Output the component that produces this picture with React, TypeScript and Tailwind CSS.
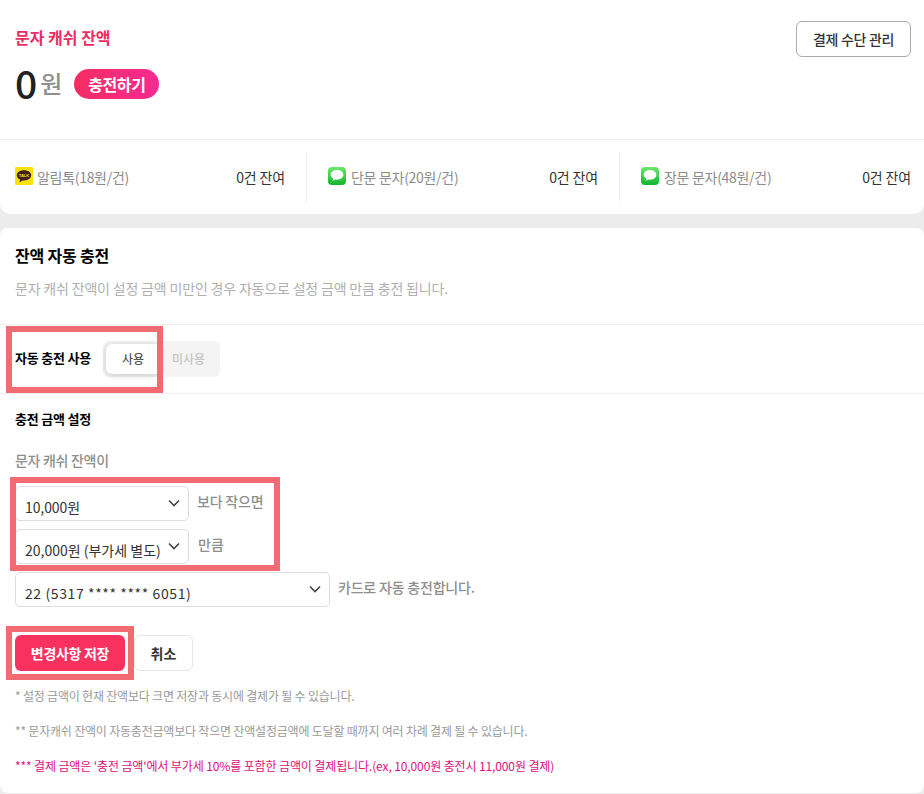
import React from "react";

const font = { fontFamily: '"Noto Sans CJK KR", "Noto Sans", sans-serif' };

function Kakao() {
  return (
    <svg width="18" height="18" viewBox="0 0 18 18" className="shrink-0">
      <rect width="18" height="18" rx="1" fill="#fae100" />
      <path d="M9 3.2C4.9 3.2 1.8 5.4 1.8 8.3c0 1.9 1.3 3.5 3.3 4.4l-.7 2.7 3-2c.5.1 1.1.1 1.6.1 4.1 0 7.2-2.300 7.200-5.200S13.100 3.200 9 3.200z" fill="#3c1e1e" />
      <text x="9" y="9.800" textAnchor="middle" fontSize="4" fontWeight="700" fill="#fae100" fontFamily="Liberation Sans">TALK</text>
    </svg>
  );
}

function Msg() {
  return (
    <svg width="18" height="18" viewBox="0 0 18 18" className="shrink-0">
      <defs>
        <linearGradient id="m" x1="0" y1="0" x2="0" y2="1">
          <stop offset="0" stopColor="#6be86a" />
          <stop offset="1" stopColor="#12b52c" />
        </linearGradient>
      </defs>
      <rect width="18" height="18" rx="4" fill="url(#m)" />
      <path d="M9 3C5.400 3 2.600 5.100 2.600 7.800c0 1.700 1.100 3.100 2.800 4 -.2.700-.6 1.300-1.100 1.800 1.100 0 2.100-.5 2.900-1.100.6.100 1.200.2 1.800.2 3.600 0 6.400-2.200 6.400-4.900S12.600 3 9 3z" fill="#fff" />
    </svg>
  );
}

function Stat({ icon, label, border, last, gap }: { icon: React.ReactNode; label: string; border?: boolean; last?: boolean; gap: string }) {
  return (
    <div className={`flex h-[50px] flex-1 items-center justify-between ${border ? "border-l border-[#eeeeee] pl-[21px]" : ""} ${last ? "" : "pr-[21px]"}`}>
      <div className={`flex items-center ${gap}`}>
        <span className="-mt-[3px]">{icon}</span>
        <span className="text-[14px] tracking-[-0.3px] text-[#8c8c8c]">{label}</span>
      </div>
      <span className="text-[14px] tracking-[-0.15px] text-[#333]">0건 잔여</span>
    </div>
  );
}

function Select({ value, width, tracking }: { value: string; width: string; tracking: string }) {
  return (
    <div className={`flex h-[35px] items-center justify-between rounded-[5px] border border-[#dedede] bg-white pl-[9px] pr-[8px] ${width}`}>
      <span className={`mt-[7px] whitespace-nowrap text-[14px] text-[#333] ${tracking}`}>{value}</span>
      <svg width="12" height="8" viewBox="0 0 12 8" className="-mt-[1px]">
        <path d="M1 1.500l5 5 5-5" fill="none" stroke="#444" strokeWidth="1.600" />
      </svg>
    </div>
  );
}

export default function App() {
  return (
    <div style={font} className="relative h-[794px] w-[924px] overflow-hidden bg-[#ececec]">
      <section className="h-[214px] rounded-b-[10px] bg-white">
        <div className="flex h-[139px] items-start justify-between pl-[15px] pr-[13px]">
          <div>
            <h2 className="mt-[25px] text-[16px] font-bold leading-[24px] tracking-[0px] text-[#ee2d62]">문자 캐쉬 잔액</h2>
            <div className="mt-[14px] flex items-center">
              <span className="-mt-[3px] text-[39px] font-medium leading-[44px] text-[#222]">0</span>
              <span className="ml-[3px] -mt-[1px] text-[24px] font-medium leading-[32px] text-[#8f8f8f]">원</span>
              <button className="ml-[12px] h-[30px] w-[85px] rounded-full bg-gradient-to-r from-[#f52b60] to-[#f72a94] text-[16px] font-bold leading-[30px] tracking-[-0.4px] text-white">
                충전하기
              </button>
            </div>
          </div>
          <button className="mt-[21px] h-[36px] w-[115px] rounded-[6px] border border-[#ababab] bg-white text-[14px] font-medium tracking-[-0.3px] text-[#333]">
            결제 수단 관리
          </button>
        </div>
        <div className="flex h-[75px] items-start border-t border-[#eeeeee] pl-[15px] pr-[13px] pt-[12px]">
          <Stat icon={<Kakao />} label="알림톡(18원/건)" gap="gap-[4px]" />
          <Stat icon={<Msg />} label="단문 문자(20원/건)" border gap="gap-[5px]" />
          <Stat icon={<Msg />} label="장문 문자(48원/건)" border last gap="gap-[5px]" />
        </div>
      </section>

      <section className="mt-[14px] h-[565px] rounded-[8px] bg-white">
        <div className="h-[97px] border-b border-[#eeeeee] px-[15px] pt-[14px]">
          <h2 className="text-[16px] font-bold leading-[26px] tracking-[-0.2px] text-black">잔액 자동 충전</h2>
          <p className="mt-[10px] text-[14px] leading-[20px] tracking-[-0.18px] text-[#b0b0b0]">
            문자 캐쉬 잔액이 설정 금액 미만인 경우 자동으로 설정 금액 만큼 충전 됩니다.
          </p>
        </div>
        <div className="flex h-[69px] items-center border-b border-[#eeeeee] pl-[15px]">
          <span className="-mt-[2px] text-[13px] font-bold tracking-[-0.2px] text-black">자동 충전 사용</span>
          <div className="ml-[12px] flex h-[36px] rounded-[6px] bg-[#f4f4f4] p-[3px]">
            <span className="flex w-[54px] items-center justify-center rounded-[6px] bg-white text-[12px] font-medium text-[#555] shadow-[0_1px_6px_rgba(0,0,0,0.2)]">사용</span>
            <span className="flex w-[57px] items-center justify-center text-[12px] font-medium text-[#c4c4c4]">미사용</span>
          </div>
        </div>
        <div className="pl-[15px]">
          <h3 className="mt-[16px] text-[13px] font-bold leading-[18px] tracking-[-0.2px] text-black">충전 금액 설정</h3>
          <p className="mt-[22px] text-[14px] font-medium leading-[20px] tracking-[-0.3px] text-[#8f8f8f]">문자 캐쉬 잔액이</p>
          <div className="mt-[16px] flex items-center gap-[8px]">
            <Select value="10,000원" width="w-[174px]" tracking="tracking-[-0.1px]" />
            <span className="-mt-[5px] text-[14px] font-medium tracking-[-0.2px] text-[#8f8f8f]">보다 작으면</span>
          </div>
          <div className="mt-[8px] flex items-center gap-[9px]">
            <Select value="20,000원 (부가세 별도)" width="w-[174px]" tracking="tracking-[0px]" />
            <span className="-mt-[4px] text-[14px] font-medium text-[#8f8f8f]">만큼</span>
          </div>
          <div className="mt-[8px] flex items-center gap-[8px]">
            <Select value="22 (5317 **** **** 6051)" width="w-[315px]" tracking="tracking-[0.6px]" />
            <span className="-mt-[5px] text-[14px] font-medium tracking-[-0.2px] text-[#8f8f8f]">카드로 자동 충전합니다.</span>
          </div>
          <div className="mt-[28px] flex gap-[9px]">
            <button className="h-[36px] w-[110px] rounded-[6px] bg-[#f9315f] text-[14px] font-bold tracking-[-0.3px] text-white">변경사항 저장</button>
            <button className="h-[36px] w-[59px] rounded-[6px] border border-[#e6e6e6] bg-white text-[14px] font-bold text-[#333]">취소</button>
          </div>
          <p className="mt-[7px] text-[12px] leading-[35px] tracking-[-0.2px] text-[#9a9a9a]">* 설정 금액이 현재 잔액보다 크면 저장과 동시에 결제가 될 수 있습니다.</p>
          <p className="text-[12px] leading-[35px] tracking-[-0.2px] text-[#9a9a9a]">** 문자캐쉬 잔액이 자동충전금액보다 작으면 잔액설정금액에 도달할 때까지 여러 차례 결제 될 수 있습니다.</p>
          <p className="whitespace-nowrap text-[12px] leading-[35px] tracking-[-0.12px] text-[#e0107d]">*** 결제 금액은 '충전 금액'에서 부가세 10%를 포함한 금액이 결제됩니다.(ex, 10,000원 충전시 11,000원 결제)</p>
        </div>
      </section>

      <div className="pointer-events-none absolute left-[6px] top-[326px] h-[67px] w-[157px] border-[6px] border-[#f26b72]" />
      <div className="pointer-events-none absolute left-[10px] top-[477px] h-[94px] w-[270px] border-[6px] border-[#f26b72]" />
      <div className="pointer-events-none absolute left-[6px] top-[626px] h-[54px] w-[128px] border-[6px] border-[#f26b72]" />
    </div>
  );
}
